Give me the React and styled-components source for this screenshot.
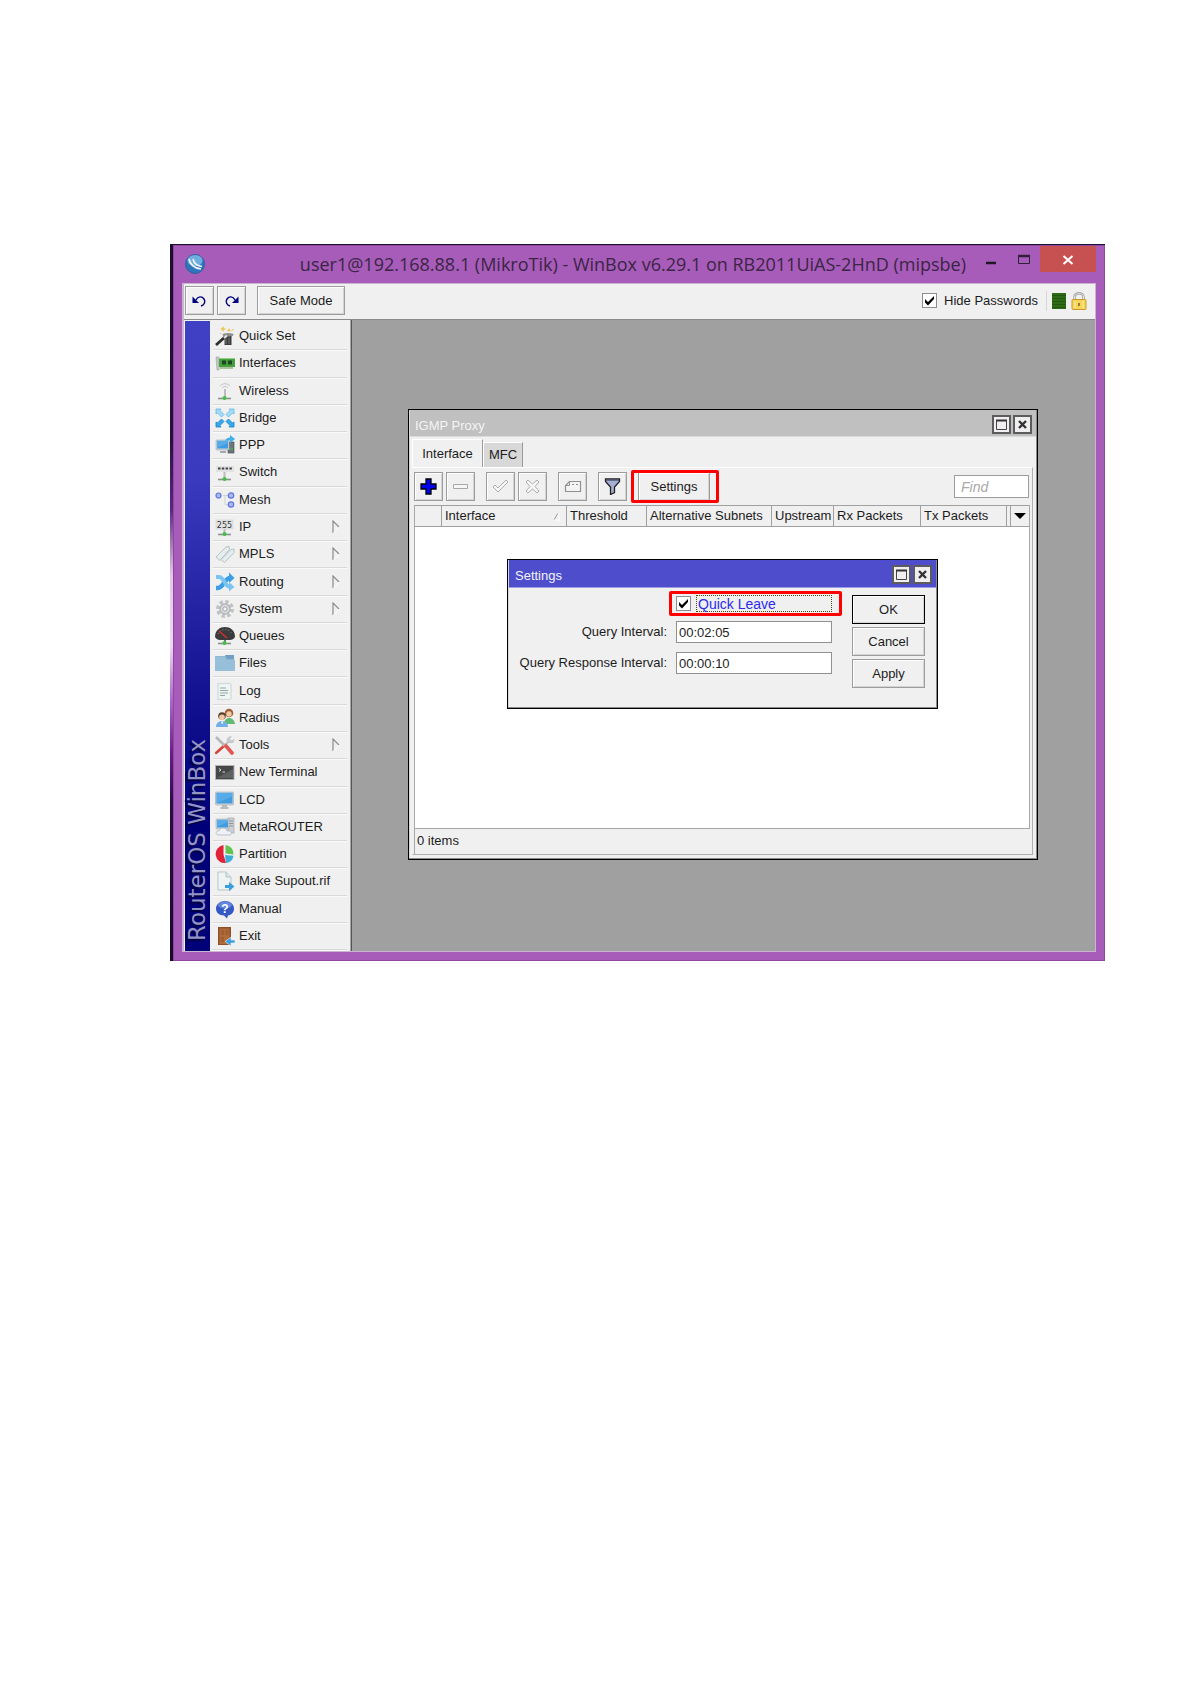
import React from "react";
import styled, { createGlobalStyle, css } from "styled-components";

const GlobalStyle = createGlobalStyle`
  *, *::before, *::after { box-sizing: border-box; }
  body {
    margin: 0;
    background: #fff;
    color: #1c1c1c;
    font: 13px/16px "Liberation Sans", Arial, sans-serif;
  }
  button, input { font: inherit; color: inherit; margin: 0; }
  svg { display: block; }
`;

const Page = styled.main`
  padding: 244px 86px 80px 170px;
`;

const Desktop = styled.div`
  padding: 1px 0 0 3px;
  background: linear-gradient(#1a1030 0, #241040 27%, #5c2580 37%, #e2c6e4 46%, #f0d8f0 56%, #b070cc 63%, #6a1c8c 71%, #2a0c48 78%, #150a2a 100%);
`;

const AppWindow = styled.section`
  display: flex;
  flex-direction: column;
  padding: 0 8px 8px;
  background: #a75cb9;
  border: 1px solid #8c489e;
`;

const TitleBar = styled.header`
  display: flex;
  align-items: flex-start;
  height: 37px;
`;

const Logo = styled.div`
  width: 20px;
  margin: 8px 0 0 3px;
`;

const Title = styled.h1`
  flex: 1;
  margin: 4px 8px 0 0;
  text-align: right;
  white-space: nowrap;
  font: 400 18px/28px "Open Sans", "Noto Sans", sans-serif;
  color: #3a2544;
`;

const WindowButton = styled.button`
  display: flex;
  justify-content: center;
  width: ${(p) => (p.$close ? 56 : 33)}px;
  height: 26px;
  padding: ${(p) => (p.$close ? 9 : 8)}px 0 0;
  border: 0;
  background: ${(p) => (p.$close ? "#c75050" : "transparent")};
`;

const Client = styled.div`
  background: #f0f0f0;
  border: 1px solid #cbb4d2;
  border-width: 1px 1px 1px 2px;
`;

const MainToolbar = styled.div`
  display: flex;
  align-items: center;
  height: 36px;
  padding: 0 8px 2px 1px;
  border-bottom: 1px solid #8a8a8a;
`;

const Button = styled.button`
  display: flex;
  align-items: center;
  justify-content: center;
  width: ${(p) => p.$width || 29}px;
  height: 29px;
  margin-right: ${(p) => p.$after || 0}px;
  padding: 0;
  background: #f0f0f0;
  border: 1px solid ${(p) => (p.$primary ? "#000" : "#9c9c9c")};
  box-shadow: inset 1px 1px #fff, inset -1px -1px #d4d4d4;
  white-space: nowrap;
`;

const CheckLabel = styled.label`
  display: flex;
  align-items: center;
  gap: ${(p) => p.$gap || 5}px;
`;

const HideLabel = styled(CheckLabel)`
  margin-left: auto;
`;

const CheckBox = styled.span`
  display: grid;
  place-items: center;
  > * { grid-area: 1 / 1; }
  svg { pointer-events: none; }
`;

const CheckInput = styled.input`
  appearance: none;
  width: 15px;
  height: 15px;
  background: #fff;
  border: 1px solid #8e8e8e;
  &:not(:checked) + svg { display: none; }
`;

const Status = styled.div`
  display: flex;
  align-items: center;
  gap: 5px;
  height: 20px;
  margin-left: 8px;
  padding-left: 5px;
  border-left: 1px solid #d6d6d6;
`;

const Load = styled.div`
  width: 14px;
  height: 16px;
  background: repeating-linear-gradient(#2e6b17 0 2px, #24570f 2px 3px);
`;

const Body = styled.div`
  display: flex;
  min-height: 631px;
`;

const Brand = styled.div`
  display: flex;
  align-items: center;
  width: 25px;
  margin: 1px 0 0 1px;
  padding-top: 10px;
  writing-mode: vertical-rl;
  transform: rotate(180deg);
  background: linear-gradient(#000078 0, #000078 20%, #10108e 38%, #3a3abe 75%, #4040c4 100%);
  font: 23px/25px "DejaVu Sans", sans-serif;
  color: #9494c4;
  text-shadow: -2px -2px 1px #000040;
  white-space: nowrap;
`;

const Menu = styled.nav`
  display: flex;
  flex-direction: column;
  width: 142px;
  padding: 3px 3px 1px;
  border-right: 2px ridge #a8a8a8;
`;

const MenuItem = styled.a`
  display: flex;
  flex: 1;
  align-items: center;
  gap: 4px;
  padding: 0 6px 0 2px;
  border-bottom: 1px solid #d9d9d9;
  box-shadow: 0 1px #fafafa;
  color: inherit;
  text-decoration: none;
  white-space: nowrap;
`;

const MenuText = styled.span`
  flex: 1;
`;

const Workspace = styled.div`
  position: relative;
  flex: 1;
  background: #a0a0a0;
`;

const Frame = styled.section`
  position: absolute;
  left: ${(p) => p.$x}px;
  top: ${(p) => p.$y}px;
  width: ${(p) => p.$width}px;
  background: #f0f0f0;
  border: 1px solid #000;
  box-shadow: inset -1px -1px #8a8a8a, inset 1px 1px #d8d8d8;
`;

const FrameBar = styled.header`
  display: flex;
  align-items: center;
  justify-content: space-between;
  height: ${(p) => (p.$active ? 28 : 27)}px;
  margin: 0 1px;
  padding: ${(p) => (p.$active ? "1px 4px 0 6px" : "3px 4px 0 5px")};
  background: ${(p) => (p.$active ? "#4e4ecd" : "#c0c0c0")};
  border-bottom: 1px solid ${(p) => (p.$active ? "#9c9ce6" : "#dadada")};
  color: #f4f4f4;
`;

const FrameTitle = styled.h2`
  margin: 0;
  padding-top: 3px;
  font: inherit;
`;

const FrameButtons = styled.div`
  display: flex;
  gap: 2px;
`;

const FrameButton = styled.button`
  display: grid;
  place-items: center;
  width: 19px;
  height: 19px;
  padding: 0;
  background: #f0eef0;
  border: 2px solid #5c5c5c;
`;

const Tabs = styled.div`
  display: flex;
  align-items: flex-end;
  height: 30px;
  padding: 0 4px 0 3px;
`;

const Tab = styled.button`
  width: ${(p) => p.$width}px;
  height: ${(p) => (p.$active ? 28 : 25)}px;
  padding: 0;
  border: 0;
  border-top: 1px solid #fff;
  border-left: 1px solid #fff;
  border-right: 1px solid #9a9a9a;
  background: ${(p) => (p.$active ? "#f0f0f0" : "#d8d8d8")};
`;

const Panel = styled.div`
  margin: 0 4px 4px 3px;
  padding: 0 2px 0 1px;
  border: 1px solid #b0b0b0;
  border-top-color: #fff;
  border-left-color: #f0f0f0;
`;

const Tools = styled.div`
  display: flex;
  align-items: center;
  height: 37px;
`;

const marked = css`
  &::after {
    content: "";
    position: absolute;
    inset: ${(p) => p.$inset};
    border: 3px solid #fe0000;
    border-radius: 2px;
    pointer-events: none;
  }
`;

const Marked = styled.div`
  position: relative;
  ${marked}
`;

const Find = styled.input`
  width: 75px;
  height: 23px;
  margin: 0 1px 0 auto;
  padding: 0 6px;
  border: 1px solid #9c9c9c;
  background: #fff;
  font-style: italic;
  font-size: 14px;
  &::placeholder { color: #a8a8a8; opacity: 1; }
`;

const ListBox = styled.div`
  height: 324px;
  background: #fff;
  border: 1px solid #a8a8a8;
  border-top: 0;
`;

const Table = styled.table`
  width: 100%;
  table-layout: fixed;
  border-collapse: separate;
  border-spacing: 0;
`;

const Th = styled.th`
  height: 22px;
  padding: 0 0 0 ${(p) => (p.$bare ? 0 : 3)}px;
  background: #f0f0f0;
  border: solid #a0a0a0;
  border-width: 1px 1px 1px 0;
  text-align: left;
  font-weight: 400;
  white-space: nowrap;
  &:last-child { border-right: 0; }
  > svg { margin: 0 auto; }
`;

const ThInner = styled.div`
  display: flex;
  align-items: center;
  justify-content: space-between;
  padding-right: 5px;
`;

const Count = styled.footer`
  height: 25px;
  padding: 4px 2px;
  border-left: 1px solid #a8a8a8;
`;

const Dialog = styled.form`
  display: flex;
  justify-content: space-between;
  padding: 7px 12px 20px 9px;
`;

const Fields = styled.div`
  display: grid;
  grid-template-columns: 150px 156px;
  grid-template-rows: 17px;
  grid-auto-rows: 22px;
  column-gap: 9px;
  row-gap: 9px;
  text-align: right;
  white-space: nowrap;
`;

const QuickRow = styled(Marked)`
  grid-column: 2;
  display: flex;
  align-items: center;
  height: 17px;
`;

const QuickText = styled.span`
  width: 136px;
  height: 17px;
  padding-left: 1px;
  border: 1px dotted #4a4a10;
  color: #2a2af0;
  text-align: left;
  font-size: 14px;
  line-height: 16px;
`;

const FieldLabel = styled.label`
  line-height: 22px;
`;

const Field = styled.input`
  width: 100%;
  height: 22px;
  padding: 0 2px;
  border: 1px solid #909090;
  background: #fff;
`;

const Actions = styled.div`
  display: flex;
  flex-direction: column;
  gap: 3px;
`;

const Svg = ({ w = 20, h = 20, vb, children }) => (
  <svg width={w} height={h} viewBox={vb || `0 0 ${w} ${h}`} fill="none" aria-hidden="true">
    {children}
  </svg>
);

const Plug = () => (
  <g>
    <path d="M3 17.5h13" stroke="#8b908b" strokeWidth="1.6" />
    <circle cx="9.5" cy="17" r="2" fill="#41bf45" />
  </g>
);

const Monitor = ({ x = 0, y = 0, w = 12, h = 9 }) => (
  <g>
    <rect x={x} y={y} width={w} height={h} rx="1" fill="#cfd4d8" stroke="#a3a9ae" strokeWidth=".6" />
    <rect x={x + 1} y={y + 1} width={w - 2} height={h - 2.5} fill="#3f9ce0" />
    <path d={`M${x + 1} ${y + h - 2}l${w - 2} -${h / 2}v-${h / 2 - 2.5}h-${w - 2}z`} fill="#69b6ee" opacity=".6" />
  </g>
);

const icons = {
  wand: (
    <>
      <path d="M8.500 8.500h9l-1 2v8.500h-7v-8.500z" fill="#3c3c3c" />
      <ellipse cx="13" cy="8.700" rx="5.500" ry="1.700" fill="#8d8d8d" />
      <path d="M11 11.500v6.500M14 11.500v6.500" stroke="#777" />
      <path d="M1 19l9-8" stroke="#2e2e2e" strokeWidth="2.800" />
      <path d="M9 12l3-2.500" stroke="#e8e8e8" strokeWidth="2" />
      <path d="M8 0l1 2 2 1-2 1-1 2-1-2-2-1 2-1z M14 2l.8 1.400 1.400.8-1.400.8L14 6.500l-.8-1.500-1.400-.8 1.400-.8z" fill="#e9c85c" />
      <path d="M16.500 5l2-2M5 8l1-1" stroke="#e5bd4c" />
    </>
  ),
  card: (
    <>
      <path d="M1 4h3v13H2z" fill="#c3c7c3" stroke="#9da19d" strokeWidth=".6" />
      <rect x="4" y="5" width="16" height="9" fill="#46a03e" />
      <path d="M5 14h13v2H5z" fill="#a9c49b" />
      <path d="M7 7.500h4v4H7zM13 7.500h4v4h-4z" fill="#1e4a22" />
      <path d="M4 5.500h16" stroke="#8fcf83" />
    </>
  ),
  wireless: (
    <>
      <path d="M5 5c3-3 7-3 10 0M7 7c2-2 4-2 6 0" stroke="#c3c3c3" />
      <path d="M10 8v8" stroke="#bcbcbc" strokeWidth="2" />
      <Plug />
    </>
  ),
  bridge: (
    <>
      <g fill="#a4dcf8" stroke="#62b8e6" strokeWidth=".8">
        <path d="M1 1h5l-1 1.500L9 6.500 6.500 9l-4-4L1 6z" />
        <path d="M19 1h-5l1 1.500L11 6.500 13.500 9l4-4L19 6z" />
      </g>
      <g fill="#36a9ea" stroke="#1c82c6" strokeWidth=".8">
        <path d="M1 19h5l-1-1.500 4-4L6.500 11l-4 4L1 14z" />
        <path d="M19 19h-5l1-1.500-4-4L13.500 11l4 4 1.500-1z" />
      </g>
    </>
  ),
  ppp: (
    <>
      <rect x="13" y="7" width="6" height="11" fill="#6d767b" stroke="#42494d" strokeWidth=".6" />
      <path d="M14 14h4" stroke="#42c443" />
      <Monitor x={1} y={5} w={13} h={10} />
      <path d="M5 17h6" stroke="#a5aaad" strokeWidth="2" />
      <path d="M10 6c1-3 3-3.500 5-3.500V0l5 4-5 4V5.500c-2 0-3 0-5 .5z" fill="#3eb0ea" />
    </>
  ),
  switch: (
    <>
      <rect x="1" y="4" width="18" height="6" fill="#e2e2e2" />
      <path d="M3 6.500h14" stroke="#444" strokeWidth="2" strokeDasharray="2.500 1.300" />
      <path d="M9.500 10v6" stroke="#bbb" strokeWidth="2" />
      <Plug />
    </>
  ),
  mesh: (
    <>
      <path d="M8 5.500h2v9h3M10 5.500h3" stroke="#d2d2d2" />
      <g fill="#a9b9f4" stroke="#5f76dc" strokeWidth="1.200">
        <circle cx="3.500" cy="5.500" r="2.500" />
        <circle cx="16" cy="5.500" r="2.700" />
        <circle cx="16" cy="14.500" r="2.700" />
      </g>
    </>
  ),
  ip: (
    <>
      <rect x="1" y="3" width="17" height="9" fill="#e4e4e4" stroke="#cfcfcf" strokeWidth=".6" />
      <text x="9.500" y="10.500" textAnchor="middle" fontFamily="DejaVu Sans, sans-serif" fontSize="8" fill="#333">255</text>
      <path d="M9.500 12v4" stroke="#bbb" strokeWidth="2" />
      <Plug />
    </>
  ),
  mpls: (
    <g fill="#e4eeee" stroke="#b1bcbc" strokeWidth=".9">
      <path d="M1 13L11 3l3-.5.500 3L5 16.500z" />
      <path d="M6 15.500L16 5.500l3-.5v3.500L9.500 18.500z" />
    </g>
  ),
  routing: (
    <>
      <path d="M1 16h2c5 0 7-10 12-10" stroke="#3a9fe6" strokeWidth="4.500" />
      <path d="M14 .5l5.500 5.500-5.500 5z" fill="#3a9fe6" />
      <path d="M1 5h3c5 0 6 10 11 10" stroke="#7ec4f1" strokeWidth="4" />
      <path d="M14 10l5.500 5-5.500 4.500z" fill="#7ec4f1" />
    </>
  ),
  gear: (
    <>
      <circle cx="10" cy="10" r="7" stroke="#c0c3c5" strokeWidth="4" strokeDasharray="3.300 2.200" />
      <circle cx="10" cy="10" r="5" fill="#dadcdd" stroke="#b3b6b8" strokeWidth="1.400" />
      <circle cx="10" cy="10" r="2.200" fill="#f3f3f3" stroke="#9fa2a4" />
    </>
  ),
  queue: (
    <>
      <path d="M0 11C0 4 5 1 10 1s10 3 10 10c-1 2-3 3-5 3H5c-2 0-4-1-5-3z" fill="#3b3b3d" />
      <path d="M3 8c3-6 11-6 14 0" stroke="#8b8b8b" strokeDasharray="1 2" />
      <path d="M4 5l8 7" stroke="#d5302c" strokeWidth="1.500" />
      <path d="M10 14v3" stroke="#777" strokeWidth="2" />
      <Plug />
    </>
  ),
  folder: (
    <>
      <path d="M0 3h19l1 15H0z" fill="#8fb8d4" />
      <path d="M10 2h9v4h-7z" fill="#6f9fc2" />
      <path d="M0 4h9l3 3h8v11H0z" fill="#98bfda" />
    </>
  ),
  log: (
    <>
      <path d="M3 2l1.500 1L6 2l1.500 1L9 2l1.500 1L12 2l1.500 1L15 2l1 1v15l-1.500 1-1.500-1-1.500 1-1.500-1-1.500 1-1.500-1L6 19l-1.500-1L3 19z" fill="#eef5f3" stroke="#c2cecb" strokeWidth=".8" />
      <path d="M5 7h6M5 9.500h8M5 12h8M5 14.500h5" stroke="#8fa9a5" />
    </>
  ),
  users: (
    <>
      <circle cx="14" cy="5" r="4.300" fill="#a0603a" />
      <circle cx="14" cy="6" r="2.700" fill="#f3c9a2" />
      <path d="M9 16c0-8 10-8 11 0z" fill="#62bb72" />
      <circle cx="7" cy="8" r="3.800" fill="#59402f" />
      <circle cx="7" cy="9.200" r="2.800" fill="#f3c9a2" />
      <path d="M1 19c0-8 12-8 12 0z" fill="#72aee8" />
      <path d="M6 13.500l1.200 3 1.200-3z" fill="#fff" />
    </>
  ),
  tools: (
    <>
      <path d="M3 17l8-8" stroke="#b8bcbf" strokeWidth="2.200" />
      <path d="M1 18l9-8" stroke="#d9423b" strokeWidth="2.400" strokeLinecap="round" />
      <path d="M10 10l5-5" stroke="#b8bcbf" strokeWidth="2" />
      <path d="M12 7c-1-3 1-6 5-6l-2 3 1 1.500L19.500 4c0 4-3 5-5 4z" fill="#c5c9cc" />
      <path d="M1 2l9 9" stroke="#b4b8bb" strokeWidth="2.600" />
      <path d="M11 11l6 7" stroke="#e0564e" strokeWidth="3.600" strokeLinecap="round" />
    </>
  ),
  terminal: (
    <>
      <rect x=".5" y="3.500" width="18.500" height="14" fill="#454747" stroke="#b1b4b4" />
      <path d="M4 6.500l2 1.500-2 1.500M7.500 10H10" stroke="#e8e8e8" strokeWidth=".9" />
      <path d="M2 16L18 7v9z" fill="#5f6262" />
    </>
  ),
  lcd: (
    <>
      <Monitor x={0.5} y={2} w={18} h={13} />
      <path d="M7 15h5v2H7zM5.500 17h8v2h-8z" fill="#b5babd" />
    </>
  ),
  meta: (
    <>
      <rect x="13" y="1" width="6" height="15" fill="#cbd0d4" stroke="#979da2" strokeWidth=".6" />
      <path d="M14 4h4M14 6.500h4M14 9h4" stroke="#7b8287" strokeWidth=".8" />
      <Monitor x={1} y={2} w={13} h={10} />
      <path d="M3 18c-3-1-2-5 1-4 1-4 7-4 8 0 4-1 6 3 3 4z" fill="#eef1f5" stroke="#a9b0ba" strokeWidth=".7" />
    </>
  ),
  pie: (
    <>
      <path d="M8.500 10.500L11 19A9 9 0 018.500 1z" fill="#e2213a" />
      <path d="M10.500 9.500V1a8.800 8.800 0 018 9.500z" fill="#64c44e" />
      <path d="M10 11l8.500.8A8.500 8.500 0 0111 19z" fill="#3aaed8" />
    </>
  ),
  file: (
    <>
      <path d="M3 1h8l5 5v13H3z" fill="#eef4f3" stroke="#b7c6c5" />
      <path d="M11 1v5h5" fill="#d7e4e3" stroke="#b7c6c5" />
      <path d="M10 14h4v-3l5.500 4.500L14 20v-3h-4z" fill="#3d9ede" />
    </>
  ),
  help: (
    <>
      <path d="M10 2c5 0 9 3 9 7.500S16 16 13 16.500l-1 3-3-3C4 16.500 1 13.500 1 9.500S5 2 10 2z" fill="#3459c4" />
      <ellipse cx="10" cy="6" rx="7" ry="3.500" fill="#7b9ae8" opacity=".7" />
      <text x="10" y="13.500" textAnchor="middle" fontFamily="Liberation Sans, sans-serif" fontWeight="700" fontSize="12" fill="#fff">?</text>
    </>
  ),
  door: (
    <>
      <path d="M3 1h13v18H3z" fill="#8f5128" />
      <path d="M4.500 2.500h10V18h-10z" fill="#b06b38" />
      <path d="M6 4h3v5H6zM10.500 4h3v5h-3zM6 11h3v5H6z" fill="#a05f30" />
      <path d="M20 14h-4v-3l-6 4.500 6 4.500v-3h4z" fill="#3d9ede" stroke="#e6f2fa" strokeWidth=".6" />
    </>
  ),
};

const menu = [
  ["Quick Set", "wand"],
  ["Interfaces", "card"],
  ["Wireless", "wireless"],
  ["Bridge", "bridge"],
  ["PPP", "ppp"],
  ["Switch", "switch"],
  ["Mesh", "mesh"],
  ["IP", "ip", true],
  ["MPLS", "mpls", true],
  ["Routing", "routing", true],
  ["System", "gear", true],
  ["Queues", "queue"],
  ["Files", "folder"],
  ["Log", "log"],
  ["Radius", "users"],
  ["Tools", "tools", true],
  ["New Terminal", "terminal"],
  ["LCD", "lcd"],
  ["MetaROUTER", "meta"],
  ["Partition", "pie"],
  ["Make Supout.rif", "file"],
  ["Manual", "help"],
  ["Exit", "door"],
];

const columns = [
  ["", 27],
  ["Interface", 125],
  ["Threshold", 80],
  ["Alternative Subnets", 125],
  ["Upstream", 62],
  ["Rx Packets", 87],
  ["Tx Packets", 86],
  ["", 4],
];

const Tick = () => (
  <Svg w={11} h={11}>
    <path d="M1 4v3.500L4 10.500 10 4V1L4 7z" fill="#000" />
  </Svg>
);

const Submenu = () => (
  <Svg w={10} h={14}>
    <path d="M2 13V1l6 6" stroke="#8c8c8c" strokeWidth="1.200" />
    <path d="M8.500 7L2.500 13" stroke="#fff" />
  </Svg>
);

const FrameControls = () => (
  <FrameButtons>
    <FrameButton type="button" aria-label="Maximize">
      <Svg w={13} h={13}>
        <path d="M1.500 2.500h10v9h-10z" stroke="#444" />
        <path d="M1 2.500h11" stroke="#333" strokeWidth="2" />
      </Svg>
    </FrameButton>
    <FrameButton type="button" aria-label="Close">
      <Svg w={13} h={13}>
        <path d="M3 3l7 7M10 3l-7 7" stroke="#333" strokeWidth="2.400" />
      </Svg>
    </FrameButton>
  </FrameButtons>
);

const ProxyWindow = () => (
  <Frame $x={56} $y={89} $width={630}>
    <FrameBar>
      <FrameTitle>IGMP Proxy</FrameTitle>
      <FrameControls />
    </FrameBar>
    <Tabs role="tablist">
      <Tab role="tab" aria-selected="true" $active $width={71}>Interface</Tab>
      <Tab role="tab" aria-selected="false" $width={40}>MFC</Tab>
    </Tabs>
    <Panel>
      <Tools>
        <Button aria-label="Add" $after={3}>
          <Svg w={17} h={17}>
            <path d="M6 1h5v5h5v5h-5v5H6v-5H1V6h5z" fill="#0000f0" stroke="#000" strokeWidth="1.300" />
          </Svg>
        </Button>
        <Button aria-label="Remove" $after={11}>
          <Svg w={17} h={17}>
            <path d="M1.500 6.500h14v4h-14z" fill="#f6f6f6" stroke="#a8a8a8" />
          </Svg>
        </Button>
        <Button aria-label="Enable" $after={3}>
          <Svg w={17} h={17}>
            <path d="M1 9l2-2 3 3 8-8 2 2L6 14z" fill="#f6f6f6" stroke="#adadad" />
          </Svg>
        </Button>
        <Button aria-label="Disable" $after={11}>
          <Svg w={17} h={17}>
            <path d="M2 4l2-2 4.500 4L13 2l2 2-4 4.500 4 4.500-2 2-4.500-4L4 15l-2-2 4-4.500z" fill="#f6f6f6" stroke="#adadad" />
          </Svg>
        </Button>
        <Button aria-label="Comment" $after={11}>
          <Svg w={18} h={17}>
            <path d="M5.500 3.500h11v10h-15v-6z" fill="#f4f4f4" stroke="#909090" strokeWidth="1.200" />
            <path d="M1.500 7.500h4v-4M8 6.500h2M12 6.500h2" stroke="#909090" />
          </Svg>
        </Button>
        <Button aria-label="Filter" $after={11}>
          <Svg w={17} h={17}>
            <path d="M1.500 1h14v2.500L10.500 9v5.500l-4 2V9l-5-5.500z" fill="#a5afd6" stroke="#222" strokeWidth="1.300" />
            <path d="M2 2h13" stroke="#4c5470" strokeWidth="1.500" />
          </Svg>
        </Button>
        <Marked $inset="-2px -9px -2px -7px">
          <Button $width={72}>Settings</Button>
        </Marked>
        <Find aria-label="Find" placeholder="Find" />
      </Tools>
      <ListBox>
        <Table>
          <colgroup>
            {columns.map(([, width], i) => <col key={i} width={width} />)}
            <col />
          </colgroup>
          <thead>
            <tr>
              {columns.map(([name], i) => (
                <Th key={i} scope="col" $bare={!name}>
                  {i === 1 ? (
                    <ThInner>
                      {name}
                      <Svg w={8} h={9}>
                        <path d="M1 8l4-7" stroke="#999" />
                        <path d="M5 1l2 7H1" stroke="#fff" />
                      </Svg>
                    </ThInner>
                  ) : name}
                </Th>
              ))}
              <Th scope="col" aria-label="Columns" $bare>
                <Svg w={14} h={8}>
                  <path d="M1 1h12L7 7z" fill="#000" />
                </Svg>
              </Th>
            </tr>
          </thead>
        </Table>
      </ListBox>
      <Count>0 items</Count>
    </Panel>
  </Frame>
);

const SettingsWindow = () => (
  <Frame $x={155} $y={239} $width={431}>
    <FrameBar $active>
      <FrameTitle>Settings</FrameTitle>
      <FrameControls />
    </FrameBar>
    <Dialog onSubmit={(e) => e.preventDefault()}>
      <Fields>
        <QuickRow $inset="-4px -10px -4px -7px">
          <CheckLabel>
            <CheckBox>
              <CheckInput type="checkbox" defaultChecked />
              <Tick />
            </CheckBox>
            <QuickText>Quick Leave</QuickText>
          </CheckLabel>
        </QuickRow>
        <FieldLabel htmlFor="query-interval">Query Interval:</FieldLabel>
        <Field id="query-interval" defaultValue="00:02:05" />
        <FieldLabel htmlFor="response-interval">Query Response Interval:</FieldLabel>
        <Field id="response-interval" defaultValue="00:00:10" />
      </Fields>
      <Actions>
        <Button type="submit" $width={73} $primary>OK</Button>
        <Button type="button" $width={73}>Cancel</Button>
        <Button type="button" $width={73}>Apply</Button>
      </Actions>
    </Dialog>
  </Frame>
);

export default function App() {
  return (
    <Page>
      <GlobalStyle />
      <Desktop>
        <AppWindow>
          <TitleBar>
            <Logo>
              <Svg>
                <circle cx="10" cy="10" r="9.500" fill="#2f76bd" stroke="#255d98" strokeWidth=".8" />
                <ellipse cx="10" cy="6.500" rx="7.500" ry="5.500" fill="#8cc4f0" opacity=".7" />
                <path d="M4 5c1 6 5 9 12 10M8 5c1 4 4 7 9 7.500" stroke="#f2f8fd" strokeWidth="1.600" />
              </Svg>
            </Logo>
            <Title>user1@192.168.88.1 (MikroTik) - WinBox v6.29.1 on RB2011UiAS-2HnD (mipsbe)</Title>
            <WindowButton aria-label="Minimize">
              <Svg w={14} h={12}>
                <path d="M2 9h10" stroke="#201726" strokeWidth="2.500" />
              </Svg>
            </WindowButton>
            <WindowButton aria-label="Maximize">
              <Svg w={14} h={12}>
                <path d="M1.500 1.500h11v8h-11z" stroke="#302038" />
                <path d="M1 2h12" stroke="#302038" strokeWidth="2.500" />
              </Svg>
            </WindowButton>
            <WindowButton aria-label="Close" $close>
              <Svg w={12} h={10}>
                <path d="M1.500 1l9 8M10.500 1l-9 8" stroke="#fff" strokeWidth="2" />
              </Svg>
            </WindowButton>
          </TitleBar>
          <Client>
            <MainToolbar>
              <Button aria-label="Undo" $after={3}>
                <Svg w={17} h={14}>
                  <path d="M1.500 2.500v6.500h6.500z" fill="#000080" />
                  <path d="M5 6c2-4 6-4 8-1s0 6-3 7" stroke="#000080" strokeWidth="1.400" />
                </Svg>
              </Button>
              <Button aria-label="Redo" $after={11}>
                <Svg w={17} h={14}>
                  <path d="M15.500 2.500v6.500H9z" fill="#000080" />
                  <path d="M12 6C10 2 6 2 4 5s0 6 3 7" stroke="#000080" strokeWidth="1.400" />
                </Svg>
              </Button>
              <Button $width={88}>Safe Mode</Button>
              <HideLabel $gap={7}>
                <CheckBox>
                  <CheckInput type="checkbox" defaultChecked />
                  <Tick />
                </CheckBox>
                Hide Passwords
              </HideLabel>
              <Status>
                <Load />
                <Svg w={16} h={18}>
                  <path d="M3.500 8V5c0-5 9-5 9 0v3" stroke="#9a9a9a" strokeWidth="2.400" />
                  <path d="M3.500 8V5c0-5 9-5 9 0v3" stroke="#e6e6e6" strokeWidth="1" />
                  <rect x="1" y="7.500" width="14" height="10" rx="1" fill="#f6d558" stroke="#c99a2b" />
                  <path d="M4 9v7M12 9v7" stroke="#fdf0a8" />
                  <path d="M8 11v3" stroke="#8d6a1a" strokeWidth="1.600" />
                </Svg>
              </Status>
            </MainToolbar>
            <Body>
              <Brand>RouterOS WinBox</Brand>
              <Menu>
                {menu.map(([name, icon, sub]) => (
                  <MenuItem key={name} href="#">
                    <Svg>{icons[icon]}</Svg>
                    <MenuText>{name}</MenuText>
                    {sub && <Submenu />}
                  </MenuItem>
                ))}
              </Menu>
              <Workspace>
                <ProxyWindow />
                <SettingsWindow />
              </Workspace>
            </Body>
          </Client>
        </AppWindow>
      </Desktop>
    </Page>
  );
}
